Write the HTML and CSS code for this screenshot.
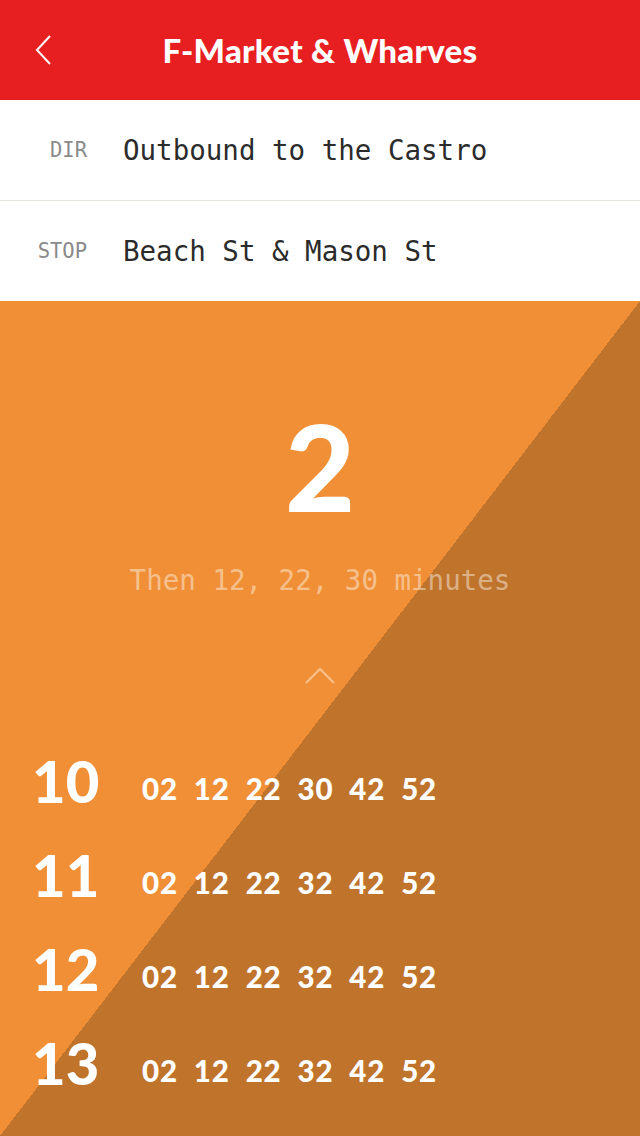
FILE: index.html
```html
<!DOCTYPE html>
<html lang="en">
<head>
<meta charset="utf-8">
<title>F-Market &amp; Wharves</title>
<link rel="stylesheet" href="styles.css">
</head>
<body>
<div class="app">
  <header class="topbar">
    <div class="back">
      <svg width="16" height="30" viewBox="0 0 16 30" aria-hidden="true">
        <polyline points="15,1 2,15 15,29" fill="none" stroke="#fff" stroke-width="2"/>
      </svg>
    </div>
    <h1 class="title">F-Market &amp; Wharves</h1>
    <div></div>
  </header>

  <section class="info">
    <div class="info-row">
      <span class="label">DIR</span>
      <span class="value">Outbound to the Castro</span>
    </div>
    <div class="info-row">
      <span class="label">STOP</span>
      <span class="value">Beach St &amp; Mason St</span>
    </div>
  </section>

  <main class="arrivals">
    <div class="next">2</div>
    <div class="then">Then 12, 22, 30 minutes</div>
    <div class="up">
      <svg width="30" height="17" viewBox="0 0 30 17" aria-hidden="true">
        <polyline points="1,16 15,2 29,16" fill="none" stroke="rgba(255,255,255,0.45)" stroke-width="2"/>
      </svg>
    </div>
    <div class="schedule">
      <div class="hour">10</div>
      <div class="mins"><span>02</span><span>12</span><span>22</span><span>30</span><span>42</span><span>52</span></div>
      <div class="hour">11</div>
      <div class="mins"><span>02</span><span>12</span><span>22</span><span>32</span><span>42</span><span>52</span></div>
      <div class="hour">12</div>
      <div class="mins"><span>02</span><span>12</span><span>22</span><span>32</span><span>42</span><span>52</span></div>
      <div class="hour">13</div>
      <div class="mins"><span>02</span><span>12</span><span>22</span><span>32</span><span>42</span><span>52</span></div>
    </div>
  </main>
</div>
</body>
</html>
```

FILE: styles.css
```css
html, body {
  margin: 0;
  padding: 0;
}
body {
  width: 640px;
  height: 1136px;
  overflow: hidden;
  font-family: "Lato", "Noto Sans", sans-serif;
}
.app {
  display: flex;
  flex-direction: column;
  height: 1136px;
}
.topbar {
  height: 100px;
  flex: none;
  background: #e81f21;
  display: grid;
  grid-template-columns: 1fr auto 1fr;
  align-items: center;
}
.back {
  padding-left: 35px;
  display: flex;
  align-items: center;
}
.back svg {
  display: block;
}
.title {
  margin: 0;
  color: #fff;
  font-family: "Lato", sans-serif;
  font-weight: 900;
  font-size: 33px;
  line-height: 1;
  letter-spacing: 0.3px;
}
.info {
  background: #fff;
  flex: none;
}
.info-row {
  height: 100px;
  display: flex;
  align-items: center;
  gap: 36px;
}
.info-row + .info-row {
  border-top: 1px solid #e6e6e0;
}
.label {
  width: 87px;
  text-align: right;
  font-family: "DejaVu Sans Mono", "Liberation Mono", monospace;
  font-size: 20.5px;
  color: #8a8a8a;
}
.value {
  font-family: "DejaVu Sans Mono", "Liberation Mono", monospace;
  font-size: 27.5px;
  color: #2b2b2b;
}
.arrivals {
  flex: 1;
  background: linear-gradient(to bottom right, #f08f36 50%, #c0732a 50%);
  display: flex;
  flex-direction: column;
  align-items: center;
  padding-top: 104px;
  color: #fff;
}
.next {
  font-family: "Lato", sans-serif;
  font-weight: 900;
  font-size: 121px;
  line-height: 121px;
  height: 121px;
}
.then {
  margin-top: 38px;
  font-family: "DejaVu Sans Mono", "Liberation Mono", monospace;
  font-size: 27.5px;
  line-height: 33px;
  color: rgba(255, 255, 255, 0.45);
}
.up {
  margin-top: 70px;
  height: 17px;
}
.up svg {
  display: block;
}
.schedule {
  align-self: stretch;
  margin-top: 50px;
  padding-left: 32px;
  display: grid;
  grid-template-columns: 110px auto;
  grid-auto-rows: 94px;
  align-items: baseline;
  justify-content: start;
}
.hour {
  font-family: "Lato", sans-serif;
  font-weight: 900;
  font-size: 58px;
  line-height: 94px;
}
.mins {
  display: flex;
  gap: 16px;
  font-family: "Lato", sans-serif;
  font-weight: 900;
  font-size: 29.5px;
  letter-spacing: 0.8px;
  position: relative;
  top: -3px;
}
```
